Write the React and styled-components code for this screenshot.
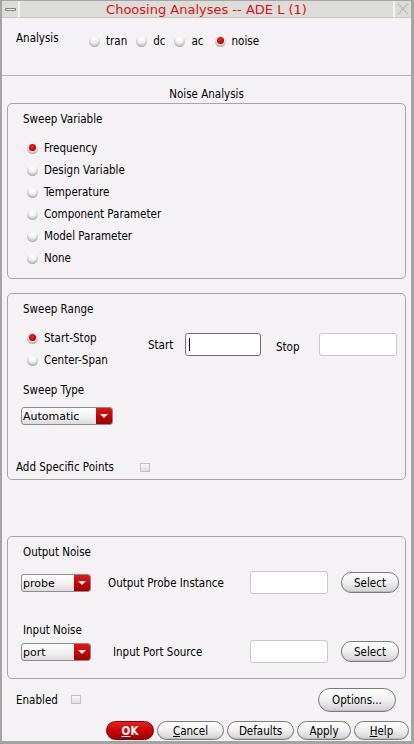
import React from 'react';
import styled, { createGlobalStyle } from 'styled-components';

const GlobalStyle = createGlobalStyle`
  html, body {
    margin: 0;
    padding: 0;
    background: #a4a4a4;
  }
  * { box-sizing: border-box; }
`;

const Window = styled.div`
  width: 414px;
  height: 744px;
  background: #f5f2f5;
  border: 2px solid #a4a4a4;
  border-top: 1px solid #a4a4a4;
  border-right-width: 3px;
  border-bottom-width: 3px;
  display: flex;
  flex-direction: column;
  font-family: "DejaVu Sans Condensed", "DejaVu Sans", sans-serif;
  font-stretch: condensed;
  font-size: 11.5px;
  color: #000;
  overflow: hidden;
`;

const TitleBar = styled.div`
  height: 17px;
  display: flex;
  background: #dcdcd8;
  border-bottom: 1px solid #c8c8c4;
`;

const TitleButton = styled.div`
  width: 18px;
  height: 16px;
  display: flex;
  align-items: center;
  justify-content: center;
  border-right: ${({side}) => side === 'left' ? '2px solid #f2f2f0' : 'none'};
  border-left: ${({side}) => side === 'right' ? '2px solid #f2f2f0' : 'none'};
  background: #dcdcd8;
`;

const MinBar = styled.div`
  width: 11px;
  height: 3px;
  border: 1px solid #8a8a88;
  background: #f4f4f2;
`;

const Title = styled.div`
  flex: 1;
  text-align: center;
  color: #dd1111;
  font-family: "DejaVu Sans", sans-serif;
  font-stretch: normal;
  font-size: 13px;
  line-height: 17px;
`;

const TopSection = styled.div`
  height: 58px;
  display: flex;
  align-items: flex-start;
  padding: 13px 0 0 14px;
  border-bottom: 1px solid #b4b4b4;
`;

const FieldLabel = styled.span`
  width: ${({w}) => w ? `${w}px` : 'auto'};
  flex: none;
`;

const RadioInline = styled.div`
  display: flex;
  gap: 9px;
  margin-top: 3px;
`;

const RadioItem = styled.label`
  display: flex;
  align-items: center;
  gap: ${({gap}) => gap || 6}px;
  height: ${({h}) => h ? `${h}px` : 'auto'};
`;

const RadioDot = styled.span`
  width: 11px;
  height: 11px;
  border-radius: 50%;
  flex: none;
  position: relative;
  background: radial-gradient(circle at 50% 30%, #ffffff 0%, #f2f2f2 38%, #c2c2c2 68%, #7c7c7c 100%);

  &::after {
    content: '';
    display: ${({on}) => on ? 'block' : 'none'};
    position: absolute;
    left: 2px;
    top: 1.5px;
    width: 7px;
    height: 7px;
    border-radius: 50%;
    background: radial-gradient(circle at 45% 40%, #ff2a2a 0%, #d80000 50%, #7a0000 100%);
  }
`;

const SectionTitle = styled.div`
  height: 27px;
  text-align: center;
  padding-top: 11px;
`;

const Group = styled.div`
  margin: ${({top}) => top || 0}px 5px 0 5px;
  height: ${({h}) => h}px;
  border: 1px solid #a6a6a6;
  border-radius: 5px;
  padding: ${({pad}) => pad || '9px 0 0 15px'};
  display: flex;
  flex-direction: column;
  flex: none;
`;

const GroupLabel = styled.div`
  height: 13px;
  line-height: 13px;
`;

const RadioList = styled.div`
  display: flex;
  flex-direction: column;
  margin: ${({mt}) => mt}px 0 0 4px;
`;

const RangeRow = styled.div`
  display: flex;
  align-items: flex-start;
  margin-top: 11px;
`;

const StartStop = styled.div`
  display: flex;
  align-items: center;
  margin: 6px 0 0 0;
`;

const TextBox = styled.div`
  width: ${({w}) => w}px;
  height: ${({h}) => h || 23}px;
  background: #fff;
  border: 1px solid ${({focus}) => focus ? '#707070' : '#c8c8c8'};
  border-radius: 3px;
  flex: none;
  position: relative;

  &::after {
    content: '';
    display: ${({focus}) => focus ? 'block' : 'none'};
    position: absolute;
    left: 3px;
    top: 4px;
    width: 1px;
    height: 13px;
    background: #000;
  }
`;

const Combo = styled.div`
  width: ${({w}) => w}px;
  height: 18px;
  display: flex;
  border: 1px solid #8c8c8c;
  border-radius: 3px;
  overflow: hidden;
  background: linear-gradient(#ffffff, #f0eef0 60%, #dcdadc);
  flex: none;
`;

const ComboText = styled.div`
  flex: 1;
  padding-left: 1px;
  line-height: 17px;
  font-family: "DejaVu Sans", sans-serif;
  font-stretch: normal;
  font-size: 11px;
`;

const ComboArrow = styled.div`
  width: 16px;
  background: linear-gradient(#e41818, #c00000 60%, #a00000);
  display: flex;
  align-items: center;
  justify-content: center;

  &::before {
    content: '';
    border-left: 4px solid transparent;
    border-right: 4px solid transparent;
    border-top: 4px solid #fff;
  }
`;

const Check = styled.span`
  width: 10px;
  height: 9px;
  flex: none;
  border: 1px solid #c4c0c4;
  background: linear-gradient(#f8f8f8, #e0dde0);
`;

const CheckRow = styled.div`
  display: flex;
  align-items: center;
  gap: ${({gap}) => gap}px;
`;

const Button = styled.button`
  width: ${({w}) => w}px;
  height: ${({h}) => h || 19}px;
  border-radius: 10px;
  border: 1px solid ${({primary}) => primary ? '#8a0000' : '#7c7c7c'};
  background: ${({primary}) => primary
    ? 'linear-gradient(#e82020, #c80000 55%, #a40000)'
    : 'linear-gradient(#ffffff, #efefef 50%, #d2d2d2)'};
  color: ${({primary}) => primary ? '#fff' : '#000'};
  font-family: "DejaVu Sans Condensed", "DejaVu Sans", sans-serif;
  font-stretch: condensed;
  font-weight: ${({primary}) => primary ? 'bold' : 'normal'};
  font-size: 11.5px;
  padding: 0;
  flex: none;
  box-shadow: inset 0 -1px 0 rgba(0,0,0,0.1);

  u { text-decoration: underline; }
`;

const NoiseRow = styled.div`
  display: flex;
  align-items: center;
  margin-top: ${({mt}) => mt}px;
  height: 23px;
`;

const BottomRow = styled.div`
  display: flex;
  align-items: center;
  justify-content: space-between;
  margin-top: 8px;
  padding: 0 15px 0 14px;
  height: 25px;
`;

const ButtonBar = styled.div`
  display: flex;
  justify-content: flex-end;
  gap: 3px;
  margin-top: 9px;
  padding-right: 2px;
`;

const sweepVars = ['Frequency', 'Design Variable', 'Temperature', 'Component Parameter', 'Model Parameter', 'None'];

const App = () => {
  return (
    <>
      <GlobalStyle />
      <Window>
        <TitleBar>
          <TitleButton side="left"><MinBar /></TitleButton>
          <Title>Choosing Analyses -- ADE L (1)</Title>
          <TitleButton side="right">
            <svg width="12" height="12" viewBox="0 0 12 12">
              <path d="M1 1 L11 11 M11 1 L1 11" stroke="#b8b8b6" strokeWidth="2" strokeDasharray="1.5 1" />
            </svg>
          </TitleButton>
        </TitleBar>

        <TopSection>
          <FieldLabel w={73}>Analysis</FieldLabel>
          <RadioInline>
            <RadioItem><RadioDot />tran</RadioItem>
            <RadioItem><RadioDot />dc</RadioItem>
            <RadioItem><RadioDot />ac</RadioItem>
            <RadioItem style={{ marginLeft: 2 }}><RadioDot on />noise</RadioItem>
          </RadioInline>
        </TopSection>

        <SectionTitle>Noise Analysis</SectionTitle>

        <Group h={176}>
          <GroupLabel>Sweep Variable</GroupLabel>
          <RadioList mt={11}>
            {sweepVars.map((v, i) => (
              <RadioItem key={v} h={22}><RadioDot on={i === 0} />{v}</RadioItem>
            ))}
          </RadioList>
        </Group>

        <Group h={187} top={14} pad="9px 0 0 8px">
          <GroupLabel style={{ marginLeft: 7 }}>Sweep Range</GroupLabel>
          <RangeRow>
            <RadioList mt={0} style={{ marginLeft: 11, width: 121 }}>
              <RadioItem h={22}><RadioDot on />Start-Stop</RadioItem>
              <RadioItem h={22}><RadioDot />Center-Span</RadioItem>
            </RadioList>
            <StartStop>
              <FieldLabel w={37}>Start</FieldLabel>
              <TextBox w={76} focus />
              <FieldLabel w={43} style={{ marginLeft: 15, marginTop: 4 }}>Stop</FieldLabel>
              <TextBox w={78} />
            </StartStop>
          </RangeRow>
          <GroupLabel style={{ marginLeft: 7, marginTop: 13 }}>Sweep Type</GroupLabel>
          <div style={{ marginTop: 10, marginLeft: 5 }}>
            <Combo w={92}>
              <ComboText>Automatic</ComboText>
              <ComboArrow />
            </Combo>
          </div>
          <CheckRow gap={26} style={{ marginTop: 35 }}>
            <span>Add Specific Points</span>
            <Check />
          </CheckRow>
        </Group>

        <Group h={143} top={56} pad="9px 0 0 13px">
          <GroupLabel style={{ marginLeft: 2 }}>Output Noise</GroupLabel>
          <NoiseRow mt={12}>
            <Combo w={70}>
              <ComboText>probe</ComboText>
              <ComboArrow />
            </Combo>
            <FieldLabel w={142} style={{ marginLeft: 17 }}>Output Probe Instance</FieldLabel>
            <TextBox w={78} />
            <Button w={58} h={21} style={{ marginLeft: 13 }}>Select</Button>
          </NoiseRow>
          <GroupLabel style={{ marginLeft: 2, marginTop: 30 }}>Input Noise</GroupLabel>
          <NoiseRow mt={3}>
            <Combo w={70}>
              <ComboText>port</ComboText>
              <ComboArrow />
            </Combo>
            <FieldLabel w={137} style={{ marginLeft: 22 }}>Input Port Source</FieldLabel>
            <TextBox w={78} />
            <Button w={58} h={21} style={{ marginLeft: 13 }}>Select</Button>
          </NoiseRow>
        </Group>

        <BottomRow>
          <CheckRow gap={13}>
            <span>Enabled</span>
            <Check />
          </CheckRow>
          <Button w={78} h={24} style={{ borderRadius: 12 }}>Options...</Button>
        </BottomRow>

        <ButtonBar>
          <Button w={48} primary><u>O</u>K</Button>
          <Button w={67}><u>C</u>ancel</Button>
          <Button w={67}>Defaults</Button>
          <Button w={54}>Apply</Button>
          <Button w={55}><u>H</u>elp</Button>
        </ButtonBar>
      </Window>
    </>
  );
};

export default App;
